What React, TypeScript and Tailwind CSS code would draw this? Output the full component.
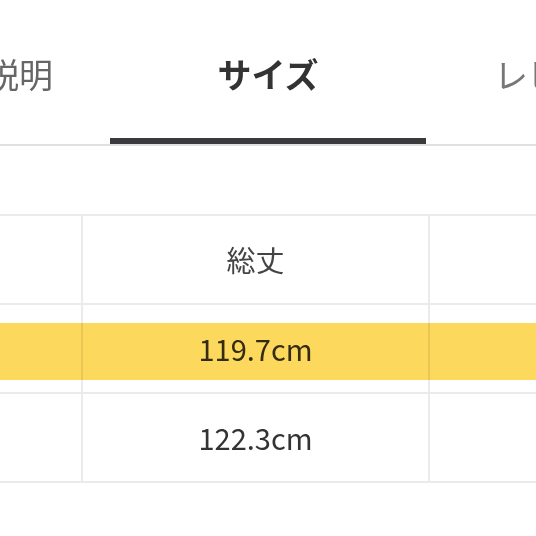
import * as React from "react";

const font = { fontFamily: '"Noto Sans CJK JP", "Noto Sans", sans-serif' };

function Tabs() {
  return (
    <div className="flex h-[146px] border-b-2 border-[#e0e0e0]">
      <div className="w-[110px] shrink-0 flex justify-end pr-[57px]">
        <span className="mt-[57px] leading-[34px] text-[34px] text-[#666666] whitespace-nowrap">商品説明</span>
      </div>
      <div className="w-[316px] shrink-0 flex flex-col items-center justify-between">
        <span className="mt-[57px] leading-[34px] text-[34px] font-bold text-[#333333] whitespace-nowrap">サイズ</span>
        <div className="w-full h-[6px] bg-[#3a3a3c]" />
      </div>
      <div className="w-[316px] shrink-0 flex pl-[68px]">
        <span className="mt-[57px] leading-[34px] text-[34px] text-[#777777] whitespace-nowrap">レビュー</span>
      </div>
    </div>
  );
}

function Row({ value, highlight, header }: { value: string; highlight?: boolean; header?: boolean }) {
  return (
    <div className="relative flex h-[89px] border-b-2 border-[#ebebeb]">
      <div className="w-[83px] shrink-0 border-r-2 border-[#ebebeb]" />
      <div
        className={
          "w-[347px] shrink-0 border-r-2 border-[#ebebeb] flex items-center justify-center text-[29px] " +
          (header ? "text-[#444444]" : "text-[#333333]")
        }
      >
        {value}
      </div>
      <div className="w-[347px] shrink-0" />
      {highlight && (
        <div className="absolute left-0 right-0 top-[18px] h-[57px] bg-[#fcd85c] mix-blend-multiply blur-[0.5px]" />
      )}
    </div>
  );
}

export default function App() {
  return (
    <div className="w-[536px] h-[536px] bg-white overflow-hidden" style={font}>
      <Tabs />
      <div className="mt-[68px] border-t-2 border-[#ebebeb]">
        <Row value="総丈" header />
        <Row value="119.7cm" highlight />
        <Row value="122.3cm" />
      </div>
    </div>
  );
}
